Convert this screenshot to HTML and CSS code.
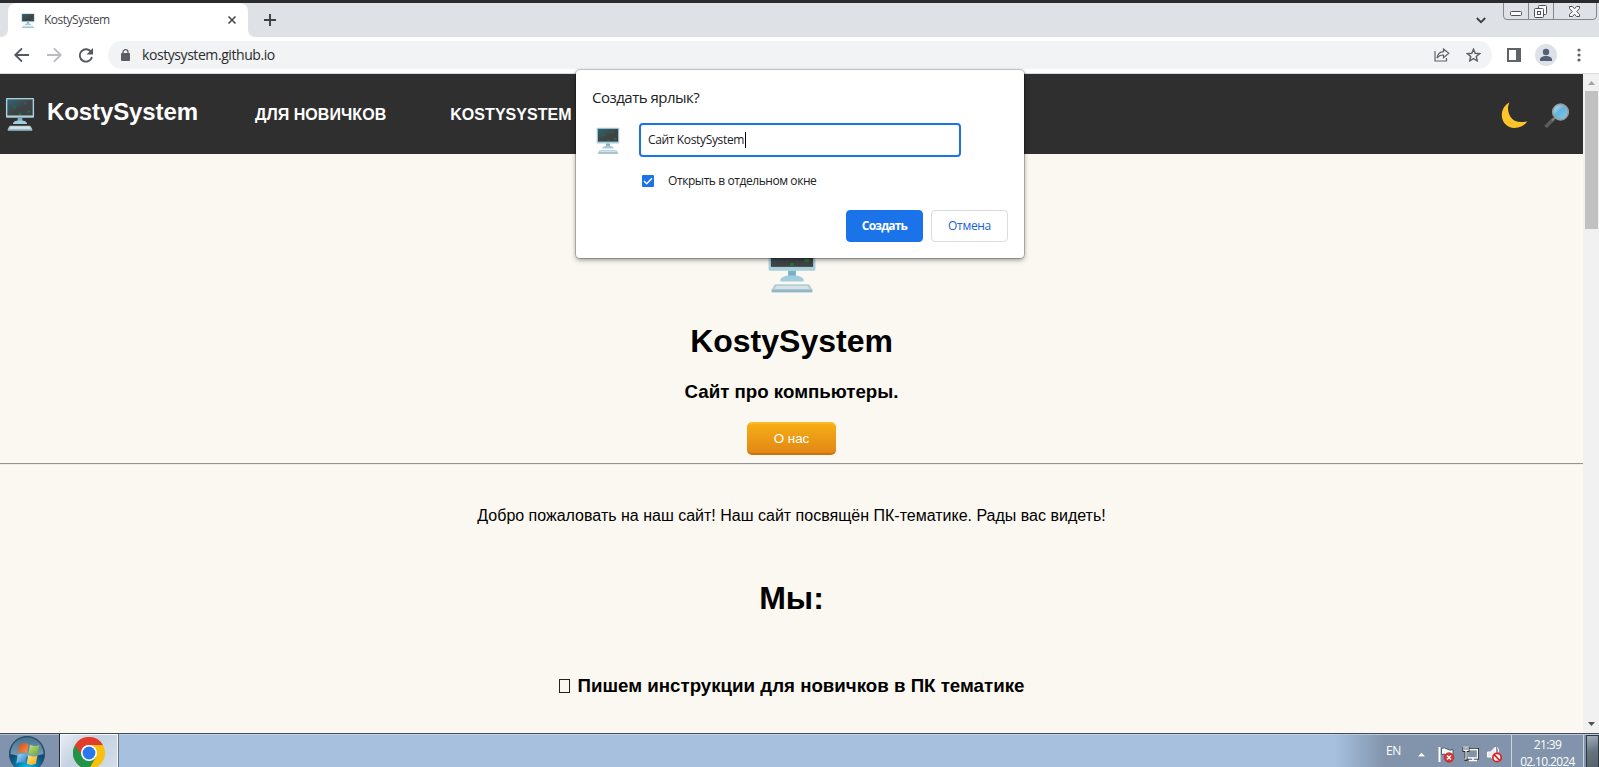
FILE: index.html
```html
<!DOCTYPE html>
<html lang="ru">
<head>
<meta charset="utf-8">
<title>KostySystem</title>
<link rel="stylesheet" href="styles.css">
</head>
<body>
<svg class="defs" width="0" height="0">
  <defs>
    <linearGradient id="screen" x1="0" y1="0" x2="1" y2="1"><stop offset="0" stop-color="#2d6674"/><stop offset=".55" stop-color="#404345"/><stop offset="1" stop-color="#3e4243"/></linearGradient>
    <linearGradient id="glass" x1="0" y1="0" x2="1" y2="1"><stop offset="0" stop-color="#c9edfb"/><stop offset=".45" stop-color="#62b2dc"/><stop offset="1" stop-color="#8acbe8"/></linearGradient>
    <radialGradient id="orb" cx=".5" cy=".95" r=".9"><stop offset="0" stop-color="#11d4fb"/><stop offset=".3" stop-color="#0785b8"/><stop offset=".62" stop-color="#144b73"/><stop offset="1" stop-color="#2b5674"/></radialGradient>
    <linearGradient id="orbShine" x1="0" y1="0" x2="0" y2="1"><stop offset="0" stop-color="#91bdd0" stop-opacity=".3"/><stop offset="1" stop-color="#b6ccd8" stop-opacity=".65"/></linearGradient>
    <linearGradient id="wr" x1="0" y1="0" x2="1" y2="1"><stop offset="0" stop-color="#d8421c"/><stop offset="1" stop-color="#f59a52"/></linearGradient>
    <linearGradient id="wg" x1="0" y1="0" x2="1" y2="1"><stop offset="0" stop-color="#c5df8a"/><stop offset="1" stop-color="#69a832"/></linearGradient>
    <linearGradient id="wb" x1="0" y1="0" x2="1" y2="1"><stop offset="0" stop-color="#a7dbf5"/><stop offset="1" stop-color="#2f7fc6"/></linearGradient>
    <linearGradient id="wy" x1="0" y1="0" x2="1" y2="1"><stop offset="0" stop-color="#ffe37a"/><stop offset="1" stop-color="#f3aa18"/></linearGradient>
    <symbol id="pc" viewBox="0 0 32 36" preserveAspectRatio="none">
      <rect x="1" y="1" width="30" height="21" rx="1" fill="#a9cfdc"/>
      <rect x="2.500" y="2.500" width="27" height="17" fill="url(#screen)"/>
      <path d="M9 10h2v2H9zM21 6h1.500v2H21zM15 17h2v2h-2zM24 14.500h3v2h-3z" fill="#1d7a34"/>
      <path d="M13.500 22h5v4h-5z" fill="#79b0c4"/>
      <path d="M8.500 27.500q1-2 5-2.500h5q4 .5 5 2.500v1.200h-15z" fill="#a3cddd"/>
      <path d="M5 30.500h22l2 3.500v1.500H3V34z" fill="#b5cfd8"/>
      <path d="M6 31.500h20l1 2H5z" fill="#d9e1e4"/>
      <path d="M3 34h26v1.500H3z" fill="#8fb7c5"/>
    </symbol>
  </defs>
</svg>
<div class="desktop">
  <div class="tabstrip">
    <div class="strip-left"></div>
    <div class="tab">
      <svg class="favicon"><use href="#pc"/></svg>
      <span class="tab-title">KostySystem</span>
      <svg class="tab-close" width="10" height="10" viewBox="0 0 10 10"><path d="M1.500 1.500l7 7M8.500 1.500l-7 7" stroke="#45494d" stroke-width="1.600"/></svg>
    </div>
    <div class="strip-rest">
      <svg class="newtab" width="12" height="12" viewBox="0 0 12 12"><path d="M6 0v12M0 6h12" stroke="#3c4043" stroke-width="1.900"/></svg>
      <svg class="tabsearch" width="10" height="7" viewBox="0 0 10 7"><path d="M.8 1L5 5.200 9.200 1" fill="none" stroke="#3c4043" stroke-width="1.800"/></svg>
      <svg class="caption" width="94" height="17" viewBox="0 0 94 17">
        <path d="M.5 0v13q0 3.500 3.500 3.500h86q3.500 0 3.500-3.500V0M25.500 0v16M50.500 0v16" fill="none" stroke="#84888d"/>
        <g fill="#f8f9fa" stroke="#4d5157"><rect x="7.500" y="8.500" width="11" height="4" rx="1"/><rect x="35.500" y="2.500" width="8" height="9" rx="1"/><rect x="31.500" y="5.500" width="9" height="9" rx="1"/><rect x="34.500" y="8.500" width="3" height="3"/>
        <path d="M66.500 3.500h3l2 2.300 2-2.300h3v2L73.700 8.500l2.800 3v2h-3l-2-2.300-2 2.300h-3v-2l2.800-3-2.800-3z"/></g>
      </svg>
    </div>
  </div>
  <div class="toolbar">
    <svg class="nav" width="96" height="24" viewBox="0 0 96 24" fill="none" stroke-width="1.900">
      <path d="M29 12H16M22 5.300L15.300 12l6.700 6.700" stroke="#55595e"/>
      <path d="M47 12h13M54 5.300l6.700 6.700-6.700 6.700" stroke="#b9bbbe"/>
      <path d="M91.300 9.200A6.200 6.200 0 1 0 92 14" stroke="#55595e"/><path d="M93 5v6.500h-6.500z" fill="#55595e"/>
    </svg>
    <div class="omnibox">
      <svg class="lock" width="9" height="12" viewBox="0 0 9 12"><rect y="4" width="9" height="8" rx="1" fill="#5a5e63"/><path d="M2 5V3a2.500 2.300 0 0 1 5 0v2" fill="none" stroke="#5a5e63" stroke-width="1.300"/></svg>
      <span class="url">kostysystem.github.io</span>
      <svg class="share" width="16" height="14" viewBox="0 0 16 14" fill="none" stroke="#5f6368" stroke-width="1.200"><path d="M1 3v10h11.500v-3M9.500 1v2.700C5.500 4 3.500 6.500 3 10.200c1.600-2.300 3.500-3.200 6.500-3.200v2.700L14.800 5.300z"/></svg>
      <svg class="star" width="15" height="14" viewBox="0 0 15 14"><path d="M7.500 1.300l1.700 4 4.300.4-3.200 2.800.9 4.300-3.700-2.200-3.700 2.200.9-4.300L1.500 5.700l4.300-.4z" fill="none" stroke="#5f6368" stroke-width="1.500"/></svg>
    </div>
    <svg class="panel" width="14" height="14" viewBox="0 0 14 14"><path d="M0 0h14v14H0z" fill="#5f6368"/><path d="M2 2h7v10H2z" fill="#fff"/></svg>
    <svg class="avatar" width="22" height="22" viewBox="0 0 22 22"><circle cx="11" cy="11" r="11" fill="#dee1e6"/><circle cx="11" cy="8" r="3.200" fill="#546078"/><path d="M5 17v-1.500c0-2.300 3-3.500 6-3.500s6 1.200 6 3.500V17z" fill="#546078"/></svg>
    <svg class="dots" width="4" height="14" viewBox="0 0 4 14" fill="#5f6368"><circle cx="2" cy="2" r="1.600"/><circle cx="2" cy="7" r="1.600"/><circle cx="2" cy="12" r="1.600"/></svg>
  </div>
  <div class="viewport">
    <div class="page">
      <header class="site-header">
        <svg class="logo"><use href="#pc"/></svg>
        <span class="brand">KostySystem</span>
        <a class="link first">ДЛЯ НОВИЧКОВ</a>
        <a class="link">KOSTYSYSTEM</a>
        <svg class="moon" width="27" height="27" viewBox="0 0 27 27"><path d="M8.500.5C3.500 3 .8 8 .8 13c0 7.500 5.500 13 12.700 13 6 0 10.500-3 12.800-6.700-7.800 2-14 .2-17-4.800C6.600 10 6.300 4.800 8.500.5z" fill="#fec42b"/></svg>
        <svg class="lens" width="26" height="26" viewBox="0 0 26 26"><path d="M10 15.500l-8.500 8.500" stroke="#5b5b5b" stroke-width="3.600"/><path d="M11.500 14L8 17.500" stroke="#858585" stroke-width="1.700"/><circle cx="16.500" cy="9" r="7.800" fill="url(#glass)" stroke="#9b9b9b" stroke-width="1.700"/></svg>
      </header>
      <main class="content">
        <svg class="hero"><use href="#pc"/></svg>
        <h1 class="title">KostySystem</h1>
        <h3 class="subtitle">Сайт про компьютеры.</h3>
        <a class="about">О нас</a>
        <hr class="rule">
        <p class="welcome">Добро пожаловать на наш сайт! Наш сайт посвящён ПК-тематике. Рады вас видеть!</p>
        <h1 class="we">Мы:</h1>
        <h3 class="item"><span class="tofu"></span>Пишем инструкции для новичков в ПК тематике</h3>
      </main>
    </div>
    <div class="scrollbar">
      <svg width="16" height="17" viewBox="0 0 16 17"><path d="M5 11l3.500-4 3.500 4z" fill="#a3a3a3"/></svg>
      <div class="thumb"></div>
      <svg class="down" width="16" height="17" viewBox="0 0 16 17"><path d="M5 6h7l-3.500 4z" fill="#505050"/></svg>
    </div>
  </div>
  <div class="taskbar">
    <div class="start">
      <svg width="36" height="33" viewBox="0 0 36 33"><circle cx="18" cy="19" r="17.600" fill="url(#orb)" stroke="#274f68"/><path d="M1.500 19a16.500 16.500 0 0 1 33 0q-16 5-33 0z" fill="url(#orbShine)"/>
        <path d="M10.500 10q4-3.300 9 -.8l-1.500 9q-4.500-2-9 .3z" fill="url(#wr)"/><path d="M21 9.800q4.500 2.200 9.300.2l-1.600 8.700q-4.700 2-9.300 0z" fill="url(#wg)"/><path d="M8.700 20q4.500-2.500 9-.3l-1.500 8.500q-4.500-2-9 .3z" fill="url(#wb)"/><path d="M19.200 20.200q4.500 2.200 9.200.2l-1.500 8.400q-4.700 2.200-9.200 0z" fill="url(#wy)"/></svg>
    </div>
    <div class="task">
      <svg width="32" height="30" viewBox="0 0 32 30"><circle cx="16" cy="16" r="16" fill="#f9bf0b"/><path d="M2.100 8A16 16 0 0 0 16 32l7-12-7-4z" fill="#229447"/><path d="M2.100 8A16 16 0 0 1 29.900 8H16a8 8 0 0 0-7.500 5.500L7.500 17z" fill="#e33b2e"/><circle cx="16" cy="16" r="8" fill="#fff"/><circle cx="16" cy="16" r="6.400" fill="#2a78ed"/></svg>
    </div>
    <div class="tray">
      <span class="lang">EN</span>
      <svg class="chev" width="9" height="5" viewBox="0 0 9 5"><path d="M.3 4.700L4.500.3l4.200 4.400z" fill="#fff" stroke="#56687c" stroke-width=".4"/></svg>
      <svg class="icons" width="64" height="17" viewBox="0 0 64 17">
        <path d="M1.500 1v15" stroke="#fff" stroke-width="2"/><path d="M3.500 2.500q3-1.500 5.500.5t6 .5v6q-3 1-6-.5t-5.500-.5z" fill="#f4f6f8" stroke="#3e4752" stroke-width=".8"/><circle cx="11" cy="11.500" r="4.800" fill="#de3434" stroke="#b71f1f" stroke-width=".6"/><path d="M9 9.500l4 4M13 9.500l-4 4" stroke="#fff" stroke-width="1.500"/>
        <path d="M29.500 3.500h10v8.500h-10z" fill="#6b7b8d" stroke="#222" stroke-width="3"/><path d="M29.500 3.500h10v8.500h-10z" fill="#8193a5" stroke="#fff" stroke-width="1.300"/><path d="M31 14.500h8M35 12v3" stroke="#fff" stroke-width="1.500"/><path d="M26 1v3.500h4V1M28 4v9.500h-1.500" fill="none" stroke="#2b3138" stroke-width="3"/><path d="M26 .5v4h4v-4M28 .5V13h-1.500" fill="none" stroke="#fff" stroke-width="1.200"/>
        <path d="M49.500 6h3l5-5v14l-5-4h-3z" fill="#e6eaed" stroke="#fff"/><path d="M59.500 1.500q1.500 2 1 5" stroke="#fff" fill="none"/><circle cx="59" cy="11.500" r="4.200" fill="#fff" stroke="#e02020" stroke-width="1.700"/><path d="M56.200 8.800l5.500 5.500" stroke="#e02020" stroke-width="1.700"/>
      </svg>
      <div class="clock"><span>21:39</span><span>02.10.2024</span></div>
      <div class="peek"></div>
    </div>
  </div>
  <div class="dialog">
    <div class="dlg-title">Создать ярлык?</div>
    <div class="dlg-row">
      <svg class="dlg-icon"><use href="#pc"/></svg>
      <div class="field"><span class="field-text">Сайт KostySystem</span><i class="caret"></i></div>
    </div>
    <div class="check-row">
      <svg width="12" height="12" viewBox="0 0 12 12"><rect width="12" height="12" rx="1" fill="#1a73e8"/><path d="M2 6l2.700 2.700L10 3.200" fill="none" stroke="#fff" stroke-width="1.500"/></svg>
      <span class="check-text">Открыть в отдельном окне</span>
    </div>
    <div class="buttons"><div class="btn primary"><span>Создать</span></div><div class="btn"><span>Отмена</span></div></div>
  </div>
</div>
</body>
</html>
```
FILE: styles.css
```css
* { box-sizing: border-box; }
body { margin: 0; overflow: hidden; }
svg { display: block; flex: none; }
.defs { position: absolute; }
.desktop { position: relative; width: 1599px; height: 767px; border-top: 3px solid #2b2a2c; display: flex; flex-direction: column; font-family: "Open Sans", "Noto Sans", sans-serif; overflow: hidden; background: #fff; }
span { white-space: nowrap; }

.tabstrip { height: 34px; display: flex; flex: none; background: linear-gradient(#dee1e6 50%, #fff 50%); }
.strip-left { width: 8px; background: #dee1e6; border-bottom-right-radius: 7px; }
.tab { width: 240px; display: flex; align-items: center; background: #fff; border-radius: 8px 8px 0 0; padding: 0 11px 0 13px; }
.favicon { width: 14px; height: 15px; }
.tab-title { margin: -1px 0 0 9px; flex: 1; font-size: 12px; letter-spacing: -.5px; color: #45494d; }
.strip-rest { flex: 1; background: #dee1e6; border-bottom-left-radius: 7px; display: flex; align-items: flex-start; }
.newtab { margin: 11px 0 0 16px; }
.tabsearch { margin: 14px 0 0 auto; }
.caption { margin: 0 2px 0 17px; }

.toolbar { height: 37px; display: flex; align-items: center; border-bottom: 1px solid #d8dadd; flex: none; }
.nav { margin-right: 12px; }
.omnibox { width: 1384px; height: 28px; border-radius: 14px; background: #f1f3f4; display: flex; align-items: center; padding: 0 11px 0 13px; }
.lock { margin-top: -1px; }
.url { margin: -2px 0 0 12px; flex: 1; font-size: 14px; letter-spacing: -.43px; color: #292b2e; }
.share { margin-right: 16px; }
.panel { margin-left: 15px; }
.avatar { margin-left: 14px; }
.dots { margin-left: 20px; }

.viewport { height: 659px; display: flex; flex: none; }
.page { width: 1583px; background: #fbf8f1; font-family: "Liberation Sans", Arial, sans-serif; color: #000; overflow: hidden; }
.site-header { height: 80px; background: #2f2f2f; display: flex; align-items: center; color: #fff; font-weight: bold; }
.logo { width: 30px; height: 34px; margin-left: 5px; }
.brand { font-size: 24px; letter-spacing: -.1px; margin: -4px 0 0 12px; width: 151px; }
.link { font-size: 16px; letter-spacing: .05px; white-space: nowrap; margin: 2px 0 0 64px; }
.first { margin-left: 57px; }
.moon { margin: 3px 0 0 auto; }
.lens { margin: 3px 13px 0 16px; }
.content { display: flex; flex-direction: column; align-items: center; }
.hero { width: 50px; height: 57px; margin-top: 82px; }
h1, h3, p { margin: 0; white-space: nowrap; }
.title { font-size: 32px; line-height: 36px; margin-top: 30px; }
.subtitle { font-size: 18.720px; line-height: 22px; margin-top: 22px; }
.about { width: 89px; height: 33px; margin-top: 19px; border-radius: 5px; border-top: 2px solid #fbba27; border-bottom: 2px solid #d0710d; background: linear-gradient(#f5ae15, #e28716); color: #fff; font-size: 13.333px; line-height: 29px; text-align: center; }
.rule { width: 100%; height: 2px; margin: 8px 0 0; border: 0; border-top: 1px solid #929292; border-bottom: 1px solid #eee; }
.welcome { font-size: 16px; line-height: 18px; margin-top: 42px; }
.we { font-size: 32px; line-height: 36px; margin-top: 55px; }
.item { font-size: 18.720px; line-height: 22px; margin-top: 59px; display: flex; align-items: center; }
.tofu { width: 11px; height: 14px; border: 1px solid #222; margin-right: 8px; }
.scrollbar { width: 16px; background: #f1f1f1; display: flex; flex-direction: column; }
.thumb { width: 13px; height: 138px; margin-left: 2px; background: #c1c1c1; }
.down { margin-top: auto; }

.taskbar { height: 34px; border-top: 1px solid #454c57; background: #a6c0de; display: flex; flex: none; overflow: hidden; box-shadow: inset 0 1px #c2d2e5; }
.start { width: 59px; background: #8294ad; padding-left: 9px; border-top: 1px solid #b1bfcf; }
.task { width: 60px; border: solid #25282e; border-width: 0 1px; border-right-color: #66717f; background: linear-gradient(135deg, #e9eef4, #c3d1e2 45%, #d4deea); padding: 3px 0 0 13px; box-shadow: inset 1px 1px #f5f8fb, inset -1px 0 #f5f8fb; }
.tray { margin-left: auto; width: 264px; background: linear-gradient(90deg, #a6c0de, #8294ab 50px); display: flex; align-items: flex-start; border-top: 1px solid #b9c9dc; }
.lang { font-size: 12px; line-height: 16px; color: #fff; margin: 8px 0 0 51px; letter-spacing: -.5px; width: 15px; }
.chev { margin: 17px 0 0 16px; }
.icons { margin: 11px 0 0 12px; }
.clock { margin-left: 9px; width: 73px; height: 33px; border-left: 1px solid #c8d4e0; border-right: 1px solid #c8d4e0; display: flex; flex-direction: column; align-items: center; color: #fff; font-size: 12px; line-height: 16.500px; letter-spacing: -.65px; padding-top: 2px; }
.peek { width: 13px; height: 33px; margin-left: auto; border: 1px solid #2f3741; background: linear-gradient(160deg, #a2aebb, #66727f 50%, #56616c); }

.dialog { position: absolute; left: 576px; top: 67px; width: 448px; height: 188px; background: #fff; border-radius: 4px; box-shadow: 0 0 0 1px rgba(0,0,0,.2), 0 2px 5px rgba(0,0,0,.4); padding: 15px 16px; color: #202124; }
.dlg-title { font-size: 15px; line-height: 24px; letter-spacing: -.5px; }
.dlg-row { display: flex; align-items: center; margin-top: 14px; }
.dlg-icon { width: 24px; height: 27px; margin: 0 18px 0 4px; }
.field { width: 322px; height: 34px; margin-left: 1px; border: 2px solid #1a73e8; border-radius: 4px; display: flex; align-items: center; padding-left: 7px; }
.field-text { font-size: 12px; letter-spacing: -.35px; margin-top: -1px; }
.caret { width: 1px; height: 16px; background: #000; margin: -1px 0 0 1px; }
.check-row { display: flex; align-items: center; height: 20px; margin: 14px 0 0 50px; }
.check-text { font-size: 12px; letter-spacing: -.42px; margin: -2px 0 0 14px; }
.buttons { display: flex; justify-content: flex-end; gap: 8px; margin-top: 19px; }
.btn { width: 77px; height: 32px; border: 1px solid #dadce0; border-radius: 4px; color: #1a63d8; font-size: 12px; line-height: 30px; text-align: center; letter-spacing: -.3px; }
.primary { background: #1a73e8; border-color: #1a73e8; color: #fff; font-weight: bold; letter-spacing: -.8px; }
```
